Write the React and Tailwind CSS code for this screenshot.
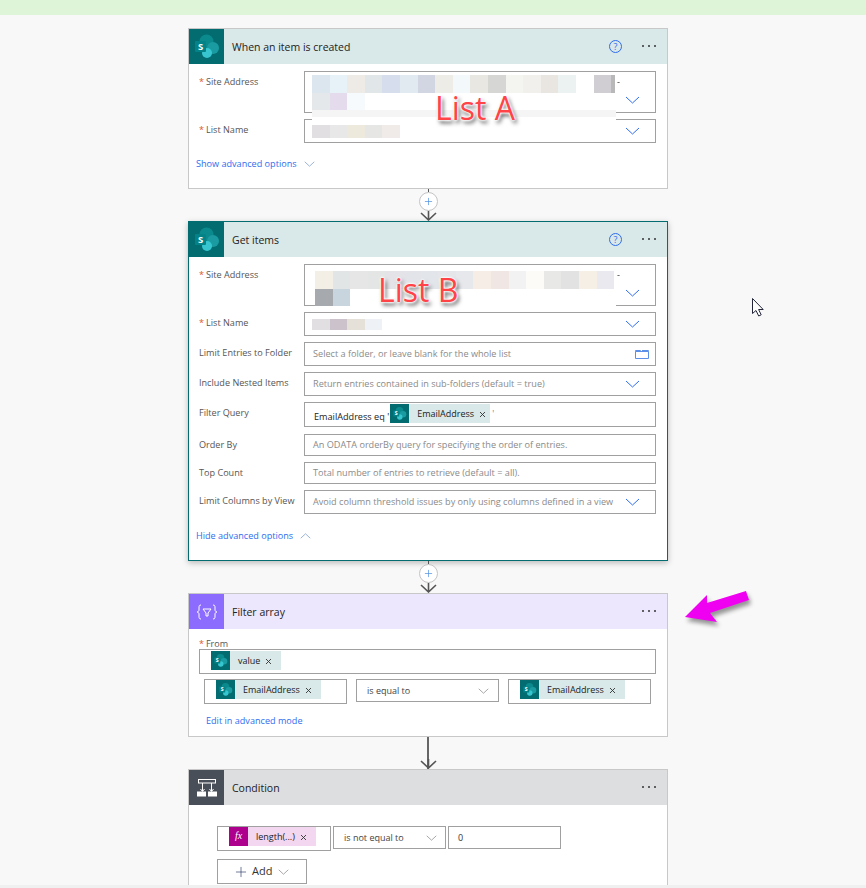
import React from 'react';
import { Plus } from 'lucide-react';

const font = "font-['Open_Sans','Liberation_Sans',sans-serif]";

const Chevron = ({ className = 'text-[#2f6df0]', up = false, w = 15 }) => (
    <svg width={w} height="8" viewBox="0 0 15 8" fill="none" stroke="currentColor" strokeWidth="1" className={className}>
        <polyline points={up ? '1,7 7.5,1 14,7' : '1,1 7.5,7 14,1'} />
    </svg>
);

const SpIcon = ({ size = 35, tile = 'w-[35px] h-[35px]' }) => (
    <div className={`${tile} bg-[#036c70] flex items-center justify-center shrink-0`}>
        <svg width={size} height={size} viewBox="0 0 35 35">
            <circle cx="17.5" cy="12.5" r="7" fill="#0b8a8e" />
            <circle cx="24" cy="19" r="6" fill="#1a9ba1" />
            <circle cx="18" cy="24" r="5" fill="#37c6d0" />
            <rect x="6" y="12" width="11" height="11" rx="1" fill="#038387" />
            <text x="11.5" y="21" textAnchor="middle" fontSize="9.5" fontWeight="700" fill="#fff" fontFamily="Open Sans, sans-serif">S</text>
        </svg>
    </div>
);

const FilterIcon = () => (
    <div className="w-[35px] h-[35px] bg-[#8c6cff] flex items-center justify-center shrink-0">
        <svg width="24" height="20" viewBox="0 0 24 20" fill="none" stroke="#fff" strokeWidth="1">
            <path d="M6 3c-2 0-2 1-2 3v2c0 1-1 2-2 2 1 0 2 1 2 2v2c0 2 0 3 2 3" />
            <path d="M18 3c2 0 2 1 2 3v2c0 1 1 2 2 2-1 0-2 1-2 2v2c0 2 0 3-2 3" />
            <path d="M8 7h8l-3 4v3h-2v-3z" />
        </svg>
    </div>
);

const ConditionIcon = () => (
    <div className="w-[35px] h-[35px] bg-[#484f58] flex items-center justify-center shrink-0">
        <svg width="22" height="22" viewBox="0 0 22 22" fill="none" stroke="#fff" strokeWidth="1">
            <rect x="2.5" y="2.5" width="17" height="3.5" />
            <path d="M6.5 6v8M15.5 6v8M4.5 12l2 2.5 2-2.5M13.5 12l2 2.5 2-2.5" />
            <rect x="1.5" y="15" width="8" height="4" fill="#fff" />
            <rect x="12.5" y="15" width="8" height="4" fill="#fff" />
        </svg>
    </div>
);

const Dots = () => (
    <div className="flex gap-[4px] items-center">
        <span className="w-[2px] h-[2px] rounded-full bg-[#333]" />
        <span className="w-[2px] h-[2px] rounded-full bg-[#333]" />
        <span className="w-[2px] h-[2px] rounded-full bg-[#333]" />
    </div>
);

const Help = () => (
    <div className="w-[13px] h-[13px] rounded-full border border-[#2f6df0] text-[#2f6df0] text-[9px] leading-[11px] text-center">?</div>
);

const CardHeader = ({ icon, title, bg, help }) => (
    <div className={`flex items-center h-[35px] ${bg}`}>
        {icon}
        <span className="ml-2 mt-[2px] text-[10.5px] text-[#222] flex-1">{title}</span>
        {help && <div className="mr-[20px]"><Help /></div>}
        <div className="mr-[11px] mb-[2px]"><Dots /></div>
    </div>
);

const Label = ({ req, children }) => (
    <div className="w-[115px] pl-[10px] text-[9.1px] text-[#555] leading-[12px] pt-[5px] shrink-0 whitespace-nowrap">
        {req && <span className="text-[#e0562b] mr-[2px]">*</span>}
        {children}
    </div>
);

const Field = ({ label, req, mt = 'mt-[6px]', h = 'h-[24px]', children }) => (
    <div className={`flex ${mt}`}>
        <Label req={req}>{label}</Label>
        <div className={`relative w-[352px] ${h} border border-[#a0a0a0] bg-white flex items-center justify-between pl-[7px] pr-[15px] text-[9.15px]`}>
            {children}
        </div>
    </div>
);

const Placeholder = ({ children }) => <span className="ml-[1px] text-[#8a8a8a] whitespace-nowrap">{children}</span>;

const Tiles = ({ colors, className = '' }) => (
    <div className={`flex ${className}`}>
        {colors.map((c, i) => (
            <span key={i} className={`${c} h-full w-[17.6px] shrink-0`} />
        ))}
    </div>
);

const CloseX = () => (
    <svg width="7" height="7" viewBox="0 0 7 7" stroke="#333" strokeWidth="0.9" className="mt-[2px] shrink-0">
        <path d="M1 1l5 5M6 1l-5 5" />
    </svg>
);

const Chip = ({ label, w, gap = 'ml-[8px]', mr = 'ml-[5px]' }) => (
    <div className={`flex items-center h-[19px] bg-[#d9e8e8] ${w} text-[9px] text-[#222] shrink-0`}>
        <SpIcon size={19} tile="w-[19px] h-[19px]" />
        <span className={gap}>{label}</span>
        <span className={mr}><CloseX /></span>
    </div>
);

const ArrowHead = ({ className }) => (
    <svg width="17" height="10" viewBox="0 0 17 10" fill="none" stroke="#555" strokeWidth="1.6" className={className}>
        <path d="M8.5 0v9M1 2l7.5 7L16 2" />
    </svg>
);

const Connector = ({ plus = true }) => (
    <div className="relative h-[32px] flex flex-col items-center">
        {plus ? (
            <>
                <div className="w-px h-[3px] bg-[#555]" />
                <div className="w-[19px] h-[19px] rounded-full border border-[#c4c4c4] bg-white flex items-center justify-center">
                    <Plus size={11} strokeWidth={1.5} className="text-[#4a8fe0]" />
                </div>
                <ArrowHead className="mt-0" />
            </>
        ) : (
            <>
                <div className="w-[2px] flex-1 bg-[#666]" />
                <ArrowHead className="-mt-[10px]" />
            </>
        )}
    </div>
);

export default function App() {
    return (
        <div className={`relative h-[888px] w-[866px] overflow-hidden bg-[#f8f8f8] ${font}`}>
            <div className="h-[15px] bg-[#dff5d8]" />

            <div className="ml-[188px] w-[480px] mt-[13px]">
                {/* When an item is created */}
                <div className="h-[161px] border border-[#c8c8c8] bg-white">
                    <CardHeader title="When an item is created" bg="bg-[#d9e8e8]" icon={<SpIcon />} help />
                    <Field label="Site Address" req mt="mt-[7px]" h="h-[42px]">
                        <div className="absolute left-[7px] top-[3px] w-[304px] h-[45px] bg-white z-10">
                            <div className="flex h-[18px]">
                                <Tiles className="h-full" colors={['bg-[#dce6ee]', 'bg-[#e6f1f8]', 'bg-[#eeeae6]', 'bg-[#e1e7e9]', 'bg-[#d6deee]', 'bg-[#e1e9f1]', 'bg-[#d2d6e2]', 'bg-[#eeece7]', 'bg-[#f3f9fb]', 'bg-[#e9e7e2]', 'bg-[#d6d6d4]', 'bg-[#f4f5f1]', 'bg-[#f2f0ed]', 'bg-[#e9e5e0]', 'bg-[#ecf2f2]', 'bg-white', 'bg-[#d0cdd3]']} />
                                <span className="w-[4px] h-full bg-[#b8b8b8]" />
                            </div>
                            <Tiles className="h-[17px]" colors={['bg-[#e4e8ea]', 'bg-[#e4dbec]', 'bg-[#f6fafd]']} />
                            <div className="h-[7px] bg-[#f5f5f5]" />
                        </div>
                        <span className="absolute left-[312px] top-[3px] text-[#333]">-</span>
                        <div className="absolute right-[15px] bottom-[8px]"><Chevron /></div>
                    </Field>
                    <Field label="List Name" req>
                        <Tiles className="h-[13px]" colors={['bg-[#e2dfe2]', 'bg-[#e8e8e8]', 'bg-[#eee9dd]', 'bg-[#e6e6e4]', 'bg-[#f0ebe8]']} />
                        <Chevron />
                    </Field>
                    <div className="flex items-center mt-[14px] pl-[7px] text-[9.1px] text-[#2f6df0]">
                        Show advanced options
                        <span className="ml-[7px]"><Chevron w={11} className="text-[#7a9ac8]" /></span>
                    </div>
                </div>

                <Connector />

                {/* Get items */}
                <div className="h-[340px] border border-[#036c70] bg-white shadow-[0_2px_6px_rgba(0,0,0,0.25)]">
                    <CardHeader title="Get items" bg="bg-[#d9e8e8]" icon={<SpIcon />} help />
                    <Field label="Site Address" req mt="mt-[7px]" h="h-[42px]">
                        <div className="absolute left-[10px] top-[6px] w-[301px] h-[36px] bg-white z-10">
                            <Tiles className="h-[18px]" colors={['bg-[#f3efe6]', 'bg-[#e2e5e5]', 'bg-[#e6e6e6]', 'bg-[#e4e6e6]', 'bg-[#e4e4e8]', 'bg-[#e2e4ea]', 'bg-[#e2e6ea]', 'bg-[#e4e6ea]', 'bg-[#e6e8ec]', 'bg-[#f6ede6]', 'bg-[#f0e6e4]', 'bg-[#f1f2f1]', 'bg-[#fcfbf7]', 'bg-[#e8e8e6]', 'bg-[#e2e2e2]', 'bg-[#f5efe6]', 'bg-[#e9e9ef]']} />
                            <Tiles className="h-[17px]" colors={['bg-[#a6a9ae]', 'bg-[#c9d5de]']} />
                        </div>
                        <span className="absolute left-[312px] top-[3px] text-[#333]">-</span>
                        <div className="absolute right-[15px] bottom-[8px]"><Chevron /></div>
                    </Field>
                    <Field label="List Name" req>
                        <Tiles className="h-[11px]" colors={['bg-[#e2dfe2]', 'bg-[#cbc2cc]', 'bg-[#e6e1d8]', 'bg-[#eef1f6]']} />
                        <Chevron />
                    </Field>
                    <Field label="Limit Entries to Folder">
                        <Placeholder>Select a folder, or leave blank for the whole list</Placeholder>
                        <svg width="14" height="10" viewBox="0 0 14 10" fill="none" stroke="#5b8fe8" strokeWidth="1" className="-mr-[9px]">
                            <path d="M.5 2.5h13v7H.5zM.5 2.5v-1h5l1 1M7 1.5h6.5v1" />
                        </svg>
                    </Field>
                    <Field label="Include Nested Items">
                        <Placeholder>Return entries contained in sub-folders (default = true)</Placeholder>
                        <Chevron />
                    </Field>
                    <Field label="Filter Query" h="h-[25px]">
                        <div className="flex items-start self-start pt-[1px] text-[#222] ml-[2px]">
                            <span className="mt-[6px] whitespace-nowrap">EmailAddress eq '</span>
                            <span className="ml-[1px]"><Chip label="EmailAddress" w="w-[100px]" /></span>
                            <span className="ml-[2px] mt-[3px] text-[#888]">'</span>
                        </div>
                    </Field>
                    <Field label="Order By" mt="mt-[7px]" h="h-[22px]">
                        <Placeholder>An ODATA orderBy query for specifying the order of entries.</Placeholder>
                    </Field>
                    <Field label="Top Count" h="h-[22px]">
                        <Placeholder>Total number of entries to retrieve (default = all).</Placeholder>
                    </Field>
                    <Field label="Limit Columns by View">
                        <Placeholder>Avoid column threshold issues by only using columns defined in a view</Placeholder>
                        <Chevron />
                    </Field>
                    <div className="flex items-center mt-[15px] pl-[7px] text-[9.1px] text-[#2f6df0]">
                        Hide advanced options
                        <span className="ml-[7px]"><Chevron up w={11} className="text-[#7a9ac8]" /></span>
                    </div>
                </div>

                <Connector />

                {/* Filter array */}
                <div className="h-[144px] border border-[#c8c8c8] bg-white">
                    <CardHeader title="Filter array" bg="bg-[#ede7fd]" icon={<FilterIcon />} />
                    <div className="pl-[10px] mt-[9px] text-[9px] text-[#555] leading-[11px]">
                        <span className="text-[#e0562b] mr-[2px]">*</span>From
                    </div>
                    <div className="ml-[10px] w-[457px] h-[25px] border border-[#a0a0a0] flex items-start pt-[1px] pl-[11px]">
                        <Chip label="value" w="w-[70px]" />
                    </div>
                    <div className="flex ml-[15px] mt-[5px]">
                        <div className="w-[143px] h-[25px] border border-[#a0a0a0] flex items-start pl-[11px]">
                            <Chip label="EmailAddress" w="w-[105px]" />
                        </div>
                        <div className="ml-[9px] w-[143px] h-[23px] border border-[#a0a0a0] flex items-center justify-between pl-[10px] pr-[9px] text-[9px] text-[#444]">
                            is equal to
                            <Chevron w={11} className="text-[#888]" />
                        </div>
                        <div className="ml-[9px] w-[143px] h-[25px] border border-[#a0a0a0] flex items-start pl-[11px]">
                            <Chip label="EmailAddress" w="w-[105px]" />
                        </div>
                    </div>
                    <div className="mt-[10px] pl-[17px] text-[9.1px] text-[#2f6df0]">Edit in advanced mode</div>
                </div>

                <Connector plus={false} />

                {/* Condition */}
                <div className="h-[140px] border border-[#c8c8c8] bg-white">
                    <CardHeader title="Condition" bg="bg-[#dddee0]" icon={<ConditionIcon />} />
                    <div className="flex ml-[28px] mt-[21px]">
                        <div className="w-[114px] h-[25px] border border-[#a0a0a0] flex items-start pl-[11px]">
                            <div className="flex items-center h-[19px] w-[87px] bg-[#f3d6ef] text-[9px] text-[#222]">
                                <span className="w-[19px] h-[19px] bg-[#ad008c] text-white text-[10px] italic text-center leading-[18px] font-['Liberation_Serif',serif]">fx</span>
                                <span className="ml-[8px]">length(...)</span>
                                <span className="ml-[5px]"><CloseX /></span>
                            </div>
                        </div>
                        <div className="ml-[2px] w-[113px] h-[23px] border border-[#a0a0a0] flex items-center justify-between pl-[10px] pr-[8px] text-[9px] text-[#444]">
                            is not equal to
                            <Chevron w={11} className="text-[#888]" />
                        </div>
                        <div className="ml-[2px] w-[113px] h-[23px] border border-[#a0a0a0] flex items-center pl-[9px] text-[9px] text-[#333]">0</div>
                    </div>
                    <div className="ml-[28px] mt-[8px] w-[90px] h-[25px] border border-[#a0a0a0] flex items-center pl-[15px] text-[11px] text-[#333]">
                        <Plus size={16} strokeWidth={1} className="text-[#2b3a67]" />
                        <span className="ml-[3px]">Add</span>
                        <span className="ml-[6px]"><Chevron w={11} className="text-[#888]" /></span>
                    </div>
                </div>
            </div>

            {/* annotations drawn on top of the screenshot */}
            <div className="absolute left-[435px] top-[88px] z-20 text-[32px] font-medium leading-[40px] text-[#ff4347] [text-shadow:0_0_1px_#fff,0_0_2px_#fff,0_0_3px_#fff,0_0_3px_#fff,2px_3px_4px_rgba(0,0,0,0.75)]">List A</div>
            <div className="absolute left-[378px] top-[270px] z-20 text-[32px] font-medium leading-[40px] text-[#ff4347] [text-shadow:0_0_1px_#fff,0_0_2px_#fff,0_0_3px_#fff,0_0_3px_#fff,2px_3px_4px_rgba(0,0,0,0.75)]">List B</div>

            <svg width="70" height="38" viewBox="0 0 70 38" className="absolute left-[684px] top-[590px] z-20 drop-shadow-[2px_4px_2px_rgba(0,0,0,0.4)]">
                <polygon points="1,27 23,5 23,13 62,1 65,10 26,23 33,32" fill="#f000f0" />
            </svg>

            <svg width="16" height="22" viewBox="0 0 16 22" className="absolute left-[751px] top-[297px] z-20">
                <path d="M1.5 1.5v15l3.5-3 2.7 5.5 2.5-1.2-2.6-5.3h4.6z" fill="#fff" stroke="#23263a" strokeWidth="1" />
            </svg>

            <div className="absolute left-0 right-0 bottom-0 h-[3px] bg-[#f0f0f0] z-20" />
        </div>
    );
}
